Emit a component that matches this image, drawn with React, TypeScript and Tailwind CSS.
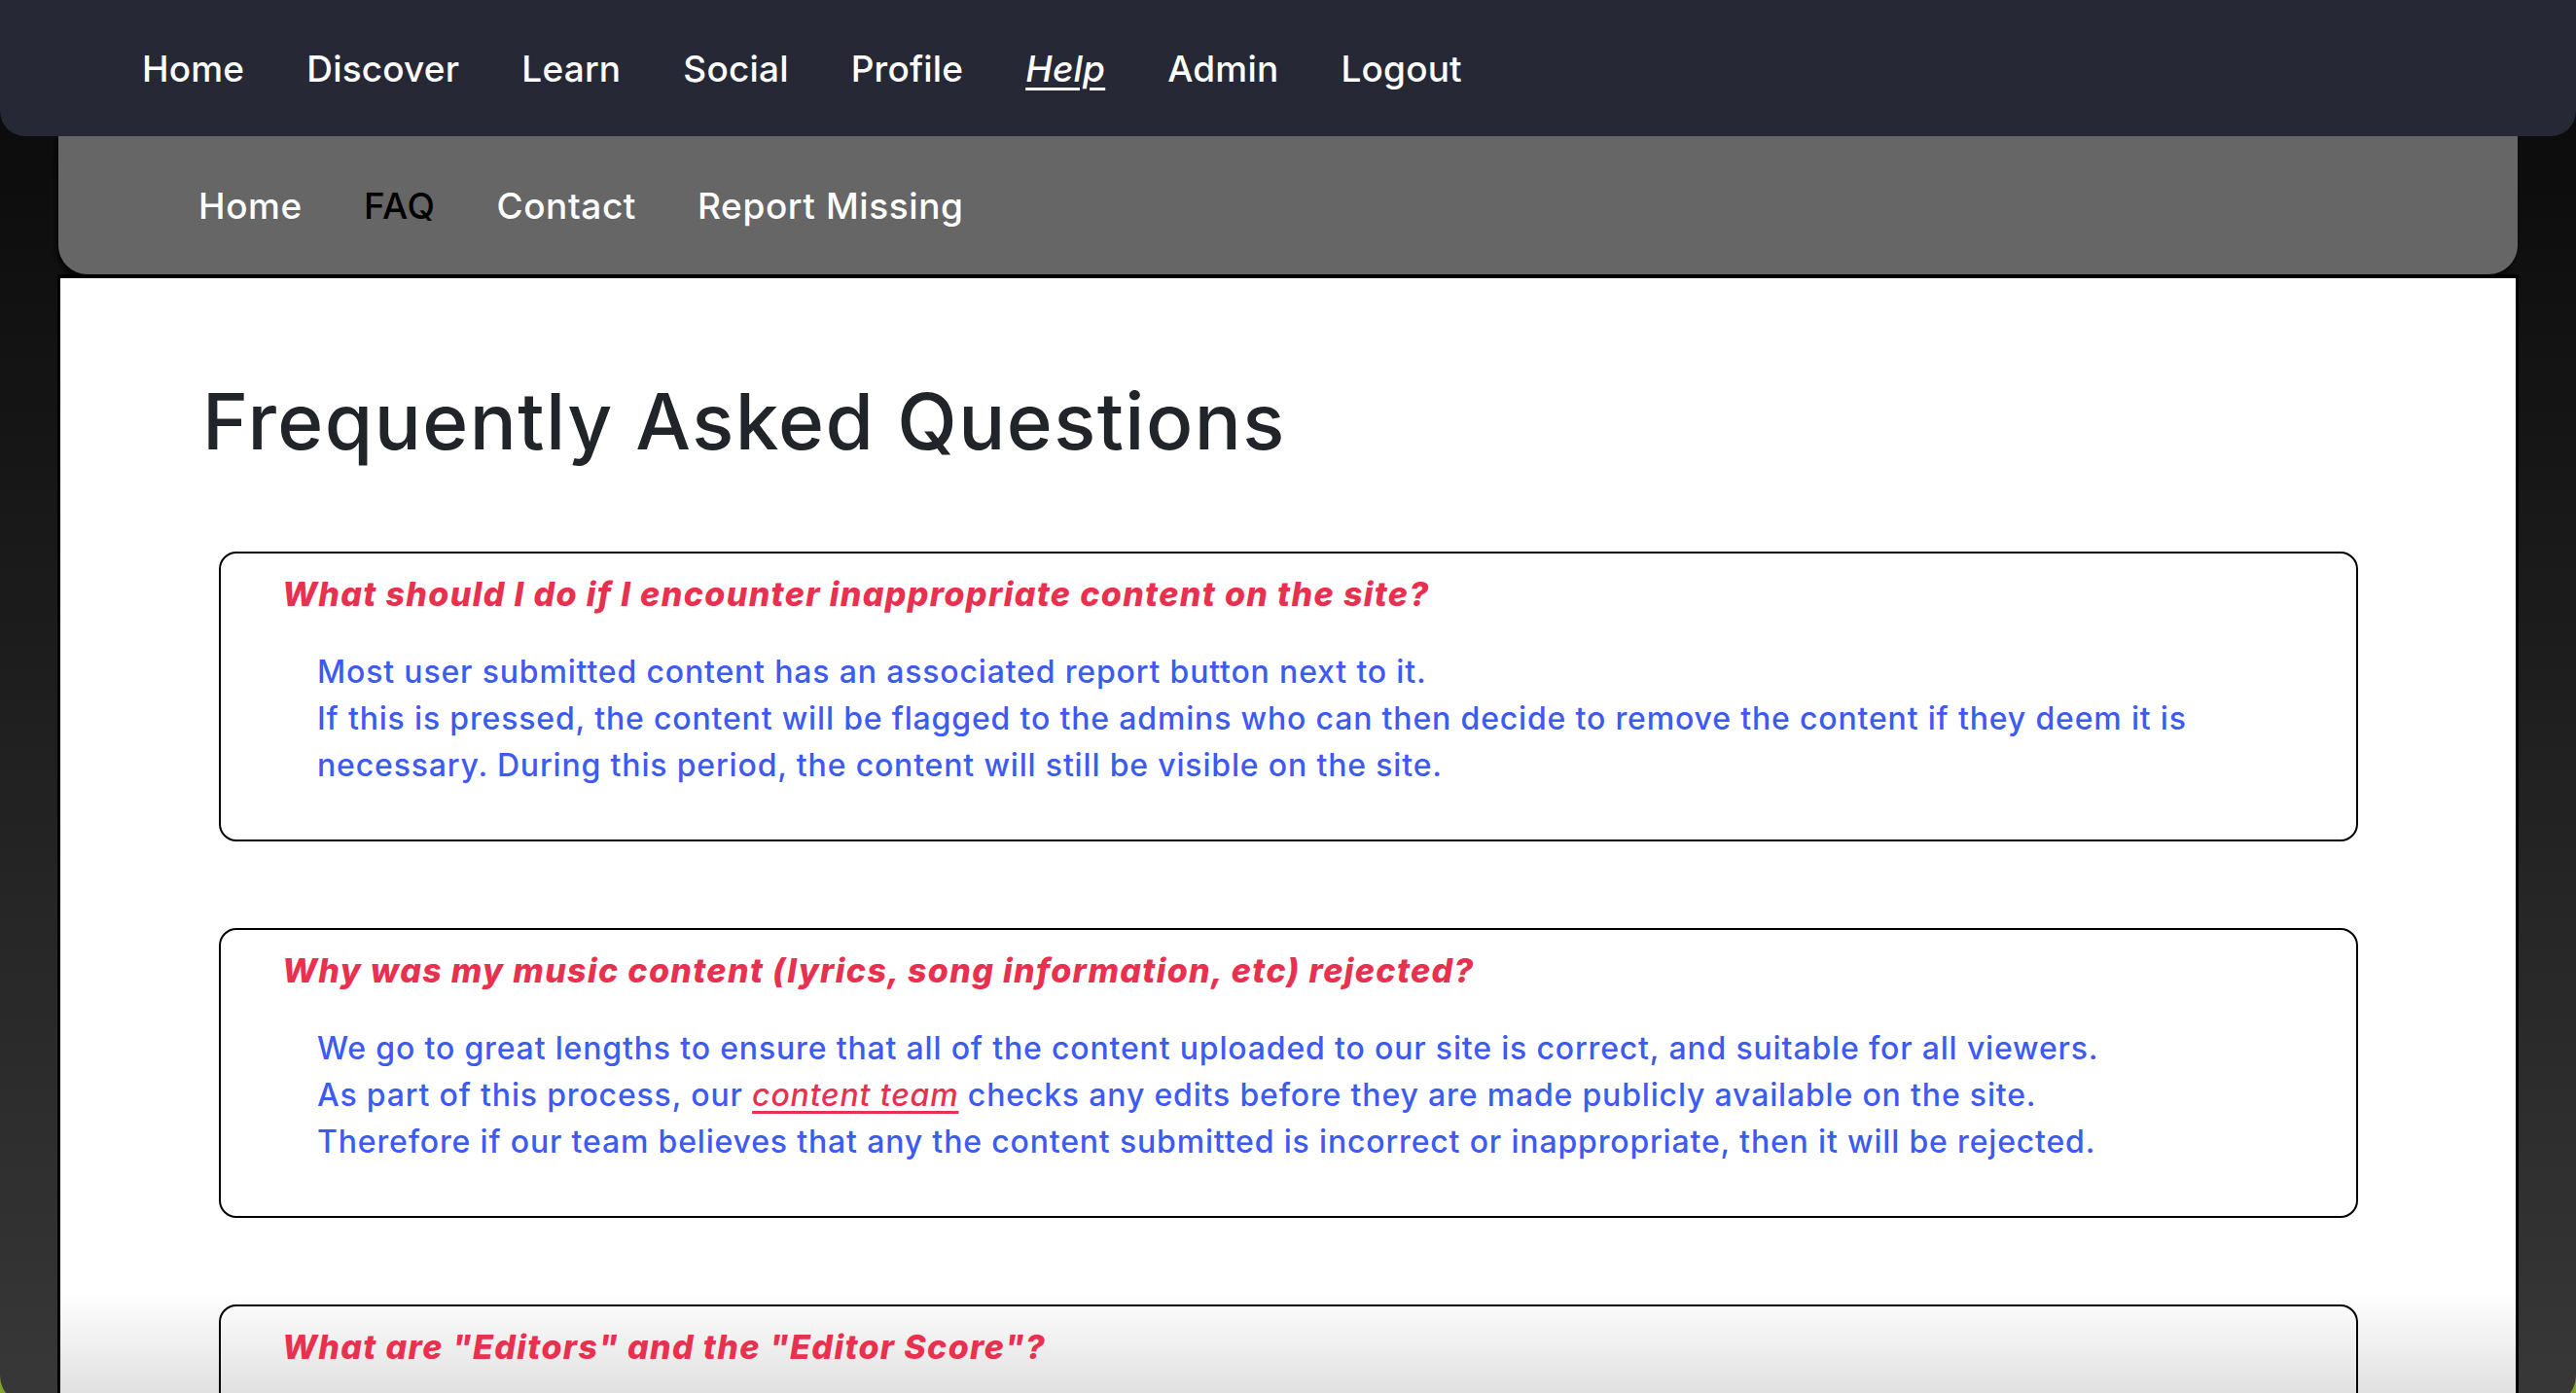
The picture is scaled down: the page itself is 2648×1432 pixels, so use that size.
const TOP_LINKS = ['Home', 'Discover', 'Learn', 'Social', 'Profile', 'Help', 'Admin', 'Logout'];
const SUB_LINKS = ['Home', 'FAQ', 'Contact', 'Report Missing'];

function Question({ title, children }: { title: string; children: React.ReactNode }) {
  return (
    <div className="rounded-[18px] border-2 border-black pt-[18px] pb-[52px] pl-[63px] pr-[40px]">
      <h3 className="text-[34px] leading-[48px] font-extrabold italic tracking-[0.04em] text-[#e8314f]">{title}</h3>
      <p className="mt-[32px] ml-[36px] text-[32px] leading-[48px] font-medium tracking-[0.026em] whitespace-nowrap text-[#3d5af1]">
        {children}
      </p>
    </div>
  );
}

export default function App() {
  return (
    <div className="h-screen overflow-hidden bg-[#7ea52c] font-['Inter',sans-serif]">
      <div className="flex h-[1444px] flex-col rounded-b-[30px] bg-gradient-to-b from-[#080808] to-[#383838]">
        {/* main nav */}
        <nav className="flex h-[140px] shrink-0 items-center gap-[64px] rounded-b-[26px] bg-[#262836] pl-[146px]">
          {TOP_LINKS.map((l) => (
            <a
              key={l}
              className={
                l === 'Help'
                  ? 'text-[37px] leading-none font-medium tracking-[0.005em] text-white italic underline underline-offset-[6px] decoration-[3px]'
                  : 'text-[37px] leading-none font-medium tracking-[0.005em] text-white'
              }
            >
              {l}
            </a>
          ))}
        </nav>

        {/* help sub nav */}
        <div className="mx-[60px] flex h-[142px] shrink-0 items-center gap-[63px] rounded-b-[30px] bg-[#666666] pl-[144px] shadow-[-2px_4px_4px_rgba(0,0,0,0.7)]">
          {SUB_LINKS.map((l) => (
            <a
              key={l}
              className={
                l === 'FAQ'
                  ? 'text-[37px] leading-none font-medium tracking-[0.016em] text-black'
                  : 'text-[37px] leading-none font-medium tracking-[0.016em] text-white'
              }
            >
              {l}
            </a>
          ))}
        </div>

        <main className="mx-[59px] flex-1 overflow-hidden border-x-[3px] border-t-[4px] border-black bg-gradient-to-b from-white from-90% to-[#dddddd]">
          <h1 className="pl-[146px] pt-[107px] text-[80px] leading-none font-medium tracking-[0.018em] text-[#212529]">
            Frequently Asked Questions
          </h1>

          <section className="mt-[94px] flex flex-col gap-[89px] pl-[163px] pr-[162px]">
            <Question title="What should I do if I encounter inappropriate content on the site?">
              Most user submitted content has an associated report button next to it.
              <br />
              If this is pressed, the content will be flagged to the admins who can then decide to remove the content if they deem it is
              <br />
              necessary. During this period, the content will still be visible on the site.
            </Question>

            <Question title="Why was my music content (lyrics, song information, etc) rejected?">
              We go to great lengths to ensure that all of the content uploaded to our site is correct, and suitable for all viewers.
              <br />
              As part of this process, our{' '}
              <a className="italic text-[#e8314f] underline decoration-[3px] underline-offset-[5px]">content team</a>{' '}
              checks any edits before they are made publicly available on the site.
              <br />
              Therefore if our team believes that any the content submitted is incorrect or inappropriate, then it will be rejected.
            </Question>

            <Question title={'What are "Editors" and the "Editor Score"?'}>
              Editors are users who help keep the information on our site accurate and up to date.
            </Question>
          </section>
        </main>
      </div>
    </div>
  );
}
